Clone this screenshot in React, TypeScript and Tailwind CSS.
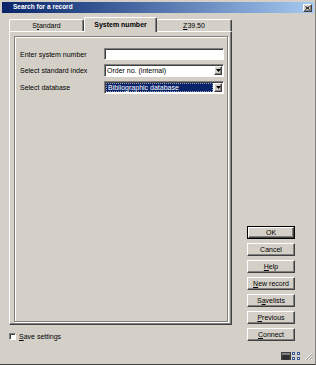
import React from "react";

const raised =
  "bg-[#d4d0c8] border border-t-white border-l-white border-r-[#404040] border-b-[#404040] shadow-[inset_-1px_-1px_0_#808080]";

function Btn({ children, def = false }: { children: React.ReactNode; def?: boolean }) {
  if (def) {
    return (
      <div className="h-[13px] w-[48px] shrink-0 border border-black flex">
        <div className={`${raised} flex-1 flex items-center justify-center leading-none`}>{children}</div>
      </div>
    );
  }
  return (
    <div className={`${raised} h-[13px] w-[48px] shrink-0 flex items-center justify-center leading-none`}>{children}</div>
  );
}

function DropBtn() {
  return (
    <div className={`${raised} w-[8px] h-full shrink-0 flex items-center justify-center`}>
      <svg width="5" height="3" viewBox="0 0 5 3">
        <path d="M0 0H5L2.5 3Z" fill="#000" />
      </svg>
    </div>
  );
}

const sunken =
  "bg-white border border-t-[#808080] border-l-[#808080] border-r-white border-b-white shadow-[inset_1px_1px_0_#404040]";

export default function App() {
  return (
    <div className="w-[316px] h-[365px] bg-[#d4d0c8] flex flex-col overflow-hidden border-b border-b-[#404040] border-r border-r-[#808080] font-['Liberation_Sans',Arial,sans-serif] text-[7px] text-black leading-none">
      {/* Title bar */}
      <div className="shrink-0 mt-[2px] ml-[2px] mr-[1px] h-[11px] bg-gradient-to-r from-[#0a246a] to-[#a6caf0] flex items-center justify-between pl-[11px] pr-[2px]">
        <span className="text-white font-bold text-[6.5px]">Search for a record</span>
        <div className={`${raised} w-[9px] h-[8px] flex items-center justify-center`}>
          <svg width="5" height="4" viewBox="0 0 5 4">
            <path d="M0.5 0.5L4.5 3.5M4.5 0.5L0.5 3.5" stroke="#000" strokeWidth="1" />
          </svg>
        </div>
      </div>

      {/* Main row */}
      <div className="shrink-0 h-[312px] flex items-start pt-[4px] pl-[9px]">
        {/* Left: tabs + panel */}
        <div className="w-[223px] shrink-0 flex flex-col">
          <div className="h-[14px] shrink-0 flex items-end">
            <div className="w-[75px] h-[12px] border-t border-l border-t-white border-l-white border-r border-r-[#404040] shadow-[inset_-1px_0_0_#808080] rounded-t-[2px] flex items-center justify-center">
              <span>
                S<span className="underline">t</span>andard
              </span>
            </div>
            <div className="relative z-10 w-[73px] h-[15px] mb-[-1px] bg-[#d4d0c8] border-t border-l border-t-white border-l-white border-r border-r-[#404040] shadow-[inset_-1px_0_0_#808080] rounded-t-[2px] flex items-center justify-center pb-[1px]">
              <span className="font-bold">System number</span>
            </div>
            <div className="w-[75px] h-[12px] border-t border-t-white border-r border-r-[#404040] shadow-[inset_-1px_0_0_#808080] rounded-t-[2px] flex items-center justify-center">
              <span>
                <span className="underline">Z</span>39.50
              </span>
            </div>
          </div>
          <div className="h-[294px] shrink-0 border border-t-white border-l-white border-r-[#404040] border-b-[#404040] shadow-[inset_-1px_-1px_0_#808080] pt-[4px] pl-[4px]">
            <div className="w-[214px] h-[286px] border border-[#808080] shadow-[inset_1px_1px_0_#fff,1px_1px_0_#fff] pl-[5px] pt-[11px] flex flex-col">
              <div className="flex items-center h-[12px] shrink-0">
                <span className="w-[84px]">Enter system number</span>
                <div className={`${sunken} w-[120px] h-[12px]`} />
              </div>
              <div className="flex items-center h-[13px] mt-[4px] shrink-0">
                <span className="w-[84px]">Select standard index</span>
                <div className={`${sunken} w-[120px] h-[13px] flex items-center p-[1px] pl-[2px]`}>
                  <span className="flex-1">Order no. (internal)</span>
                  <DropBtn />
                </div>
              </div>
              <div className="flex items-center h-[13px] mt-[4px] shrink-0">
                <span className="w-[84px]">Select database</span>
                <div className={`${sunken} w-[120px] h-[13px] flex items-center p-[1px]`}>
                  <div className="flex-1 h-full mr-[1px] bg-[#0a246a] text-white border border-dotted border-[#a0a0c0] flex items-center pl-[1px]">
                    Bibliographic database
                  </div>
                  <DropBtn />
                </div>
              </div>
            </div>
          </div>
        </div>

        {/* Right: buttons */}
        <div className="ml-[15px] pt-[209px] shrink-0 flex flex-col gap-[4px]">
          <Btn def>OK</Btn>
          <Btn>Cancel</Btn>
          <Btn>
            <span>
              <span className="underline">H</span>elp
            </span>
          </Btn>
          <Btn>
            <span>
              <span className="underline">N</span>ew record
            </span>
          </Btn>
          <Btn>
            <span>
              S<span className="underline">a</span>velists
            </span>
          </Btn>
          <Btn>
            <span>
              <span className="underline">P</span>revious
            </span>
          </Btn>
          <Btn>
            <span>
              <span className="underline">C</span>onnect
            </span>
          </Btn>
        </div>
      </div>

      {/* Save settings */}
      <div className="shrink-0 mt-[8px] pl-[9px] flex items-center h-[7px] gap-[3px]">
        <div className={`${sunken} w-[7px] h-[7px]`} />
        <span>
          <span className="underline">S</span>ave settings
        </span>
      </div>

      {/* Status icons */}
      <div className="shrink-0 mt-[12px] flex justify-end items-end pr-[2px] gap-[1px]">
        <svg width="10" height="8" viewBox="0 0 10 8">
          <rect x="0" y="0" width="10" height="8" fill="#404040" />
          <rect x="1" y="1" width="8" height="2" fill="#808080" />
          <path d="M1 4H9M1 6H9M3 3V8M5 3V8M7 3V8" stroke="#202020" strokeWidth="0.6" />
        </svg>
        <svg width="8" height="8" viewBox="0 0 8 8">
          <rect x="0" y="0" width="3" height="3" fill="#3a5a9a" />
          <rect x="5" y="0" width="3" height="3" fill="#3a5a9a" />
          <rect x="0" y="5" width="3" height="3" fill="#3a5a9a" />
          <rect x="5" y="5" width="3" height="3" fill="#3a5a9a" />
          <rect x="1" y="1" width="1" height="1" fill="#fff" />
          <rect x="6" y="1" width="1" height="1" fill="#fff" />
          <rect x="1" y="6" width="1" height="1" fill="#fff" />
          <rect x="6" y="6" width="1" height="1" fill="#fff" />
        </svg>
        <svg width="9" height="8" viewBox="0 0 9 8" className="ml-[3px]">
          <path d="M8 1L1 8M8 4L4 8M8 7L7 8" stroke="#ffffff" strokeWidth="0.8" />
          <path d="M8.6 1.6L1.6 8.6M8.6 4.6L4.6 8.6" stroke="#808080" strokeWidth="0.8" />
        </svg>
      </div>
    </div>
  );
}
